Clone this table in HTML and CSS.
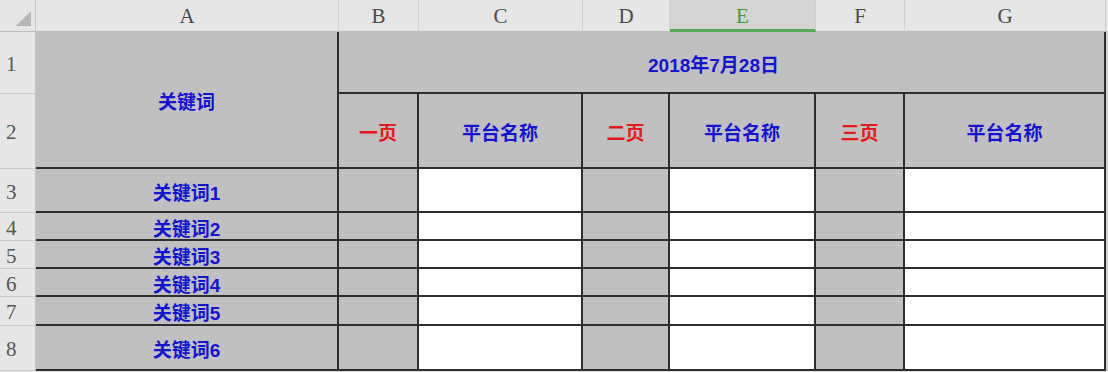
FILE: index.html
```html
<!DOCTYPE html>
<html lang="zh">
<head>
<meta charset="utf-8">
<title>关键词</title>
<link rel="stylesheet" href="styles.css">
</head>
<body>
<div class="sheet">
  <div class="corner"><span class="tri"></span></div>
  <div class="ch">A</div>
  <div class="ch">B</div>
  <div class="ch">C</div>
  <div class="ch">D</div>
  <div class="ch sel">E</div>
  <div class="ch">F</div>
  <div class="ch">G</div>
  <div class="ch last"></div>

  <div class="rh r1">1</div>
  <div class="c grey kw-head">关键词</div>
  <div class="c grey date">2018年7月28日</div>
  <div class="c edge e1"></div>

  <div class="rh r2">2</div>
  <div class="c grey red">一页</div>
  <div class="c grey blue">平台名称</div>
  <div class="c grey red">二页</div>
  <div class="c grey blue">平台名称</div>
  <div class="c grey red">三页</div>
  <div class="c grey blue">平台名称</div>
  <div class="c edge"></div>

  <div class="rh">3</div>
  <div class="c grey blue">关键词1</div>
  <div class="c grey"></div><div class="c"></div><div class="c grey"></div><div class="c"></div><div class="c grey"></div><div class="c"></div>
  <div class="c edge"></div>

  <div class="rh">4</div>
  <div class="c grey blue">关键词2</div>
  <div class="c grey"></div><div class="c"></div><div class="c grey"></div><div class="c"></div><div class="c grey"></div><div class="c"></div>
  <div class="c edge"></div>

  <div class="rh">5</div>
  <div class="c grey blue">关键词3</div>
  <div class="c grey"></div><div class="c"></div><div class="c grey"></div><div class="c"></div><div class="c grey"></div><div class="c"></div>
  <div class="c edge"></div>

  <div class="rh">6</div>
  <div class="c grey blue">关键词4</div>
  <div class="c grey"></div><div class="c"></div><div class="c grey"></div><div class="c"></div><div class="c grey"></div><div class="c"></div>
  <div class="c edge"></div>

  <div class="rh">7</div>
  <div class="c grey blue">关键词5</div>
  <div class="c grey"></div><div class="c"></div><div class="c grey"></div><div class="c"></div><div class="c grey"></div><div class="c"></div>
  <div class="c edge"></div>

  <div class="rh">8</div>
  <div class="c grey blue">关键词6</div>
  <div class="c grey"></div><div class="c"></div><div class="c grey"></div><div class="c"></div><div class="c grey"></div><div class="c"></div>
  <div class="c edge"></div>

  <div class="rh tail"></div>
  <div class="tailrow"></div>
</div>
</body>
</html>
```
FILE: styles.css
```css
html, body {
  margin: 0;
  padding: 0;
  background: #ffffff;
  overflow: hidden;
}

.sheet {
  display: grid;
  grid-template-columns: 36px 303px 80px 164px 87px 146px 89px 201px 2px;
  grid-template-rows: 32px 62px 75px 44px 28px 28px 28px 29px 45px 1px;
  width: 1108px;
  height: 372px;
  font-family: "Liberation Sans", "Noto Sans CJK SC", sans-serif;
}

.corner {
  background: #e6e6e6;
  border-right: 1px solid #c8c8c8;
  border-bottom: 1px solid #bdbdbd;
  box-sizing: border-box;
  display: flex;
  align-items: flex-end;
  justify-content: flex-end;
  padding: 0 4px 5px 0;
}

.tri {
  width: 0;
  height: 0;
  border-left: 15px solid transparent;
  border-bottom: 15px solid #b6b6b6;
}

.ch {
  background: #e6e6e6;
  border-right: 1px solid #d0d0d0;
  border-bottom: 1px solid #bdbdbd;
  box-sizing: border-box;
  display: flex;
  align-items: center;
  justify-content: center;
  font-family: "Liberation Serif", "DejaVu Serif", serif;
  font-size: 21px;
  color: #4a4a4a;
  padding-top: 2px;
}

.ch.sel {
  background: #d4d4d4;
  color: #3f9a3f;
  border-bottom: 3px solid #58a858;
  padding-top: 4px;
}

.ch.last {
  border-right: none;
}

.rh {
  grid-column: 1;
  background: #e6e6e6;
  border-right: 1px solid #c0c0c0;
  border-bottom: 1px solid #cacaca;
  box-sizing: border-box;
  display: flex;
  align-items: center;
  padding-left: 6px;
  padding-top: 3px;
  font-family: "Liberation Serif", "DejaVu Serif", serif;
  font-size: 21px;
  color: #555555;
}

.rh.r1 {
  grid-row: 2;
}

.rh.r2 {
  grid-row: 3;
}

.rh.tail {
  border-bottom: none;
}

.c {
  background: #ffffff;
  border-right: 2px solid #2e2e2e;
  border-bottom: 2px solid #2e2e2e;
  box-sizing: border-box;
  display: flex;
  align-items: center;
  justify-content: center;
  font-weight: bold;
  font-size: 19px;
  padding-top: 2px;
}

.c.grey {
  background: #c0c0c0;
}

.c.edge {
  background: #d0d0d0;
  border: none;
}

.c.edge.e1 {
  grid-column: 9;
  grid-row: 2;
}

.kw-head {
  grid-column: 2;
  grid-row: 2 / span 2;
  color: #1414d2;
}

.date {
  grid-column: 3 / span 6;
  grid-row: 2;
  color: #1414d2;
  padding-right: 16px;
}

.blue {
  color: #1414d2;
}

.red {
  color: #e41b1b;
}

.tailrow {
  grid-column: 2 / span 8;
  background: #e0e0e0;
}
```
